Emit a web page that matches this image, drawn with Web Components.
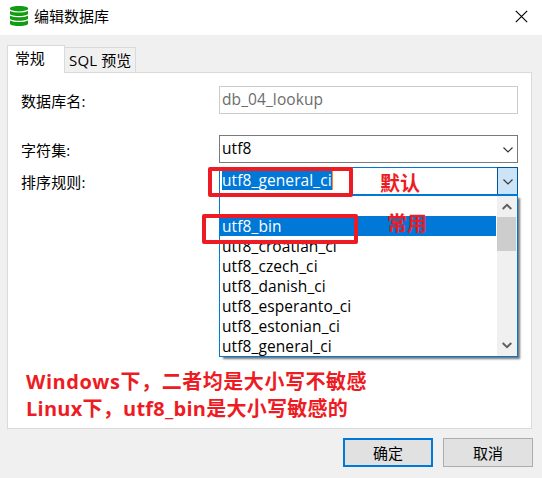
<!DOCTYPE html>
<html lang="zh-CN"><head><meta charset="utf-8"><title>编辑数据库</title>
<style>
html,body{margin:0;width:542px;height:478px;overflow:hidden;background:#f0f0f0}
body{font:15px/20px "Open Sans","Noto Sans CJK SC",sans-serif;color:#000}
</style></head><body>
<db-dialog></db-dialog>
<script>
const define=(name,html,setup)=>customElements.define(name,class extends HTMLElement{
  connectedCallback(){
    if(this.shadowRoot)return;
    const t=document.createElement('template');t.innerHTML=html;
    this.attachShadow({mode:'open'}).append(t.content.cloneNode(true));
    if(setup)setup(this,this.shadowRoot);
  }
});

define('title-bar',`<style>
:host{display:flex;height:35px;box-sizing:border-box;background:#fff;align-items:flex-start;padding:6px 14px 0 10px}
.t{margin-left:6px;line-height:20px;flex:1}
svg{display:block}.x{margin-top:4px}
</style>
<svg width="18" height="20" viewBox="0 0 18 20"><path d="M0 2C1 .5 5 0 9 0s8 .5 9 2v16c-1 1.500-5 2-9 2s-8-.5-9-2z" fill="#129c12"/>
<g fill="none" stroke="#fff" stroke-width="1.200"><path d="M-.5 4C2 5.700 5 6 9 6s7-.3 9.500-2"/><path d="M-.5 8.700C2 10.400 5 10.700 9 10.700s7-.3 9.500-2"/><path d="M-.5 13.400C2 15.100 5 15.400 9 15.400s7-.3 9.500-2"/></g></svg>
<span class="t"><slot></slot></span>
<svg class="x" width="13" height="13"><path d="M.8.8l11.400 11.400M12.200.8L.8 12.200" stroke="#000" stroke-width="1.150"/></svg>`);

define('tab-item',`<style>
:host{display:block;box-sizing:border-box;height:25px;width:71px;border:1px solid #dadada;border-left:0;border-bottom:0;padding:2px 0 0 4px;white-space:nowrap;letter-spacing:.15px}
:host([active]){height:28px;width:58px;background:#fff;border-left:1px solid #dadada;margin-bottom:-1px;padding:2px 0 0 7px;letter-spacing:-.2px}
</style><slot></slot>`);

define('form-row',`<style>
:host{display:grid;grid-template-columns:198px 299px;height:28px}
label{padding-top:5px;letter-spacing:.1px}
</style><label></label><slot></slot>`,(h,r)=>{r.querySelector('label').textContent=h.getAttribute('label')});

define('text-box',`<style>
:host{display:flex;position:relative;box-sizing:border-box;height:28px;border:1px solid #7a7a7a;background:#fff;padding:2px 0 0 2px;white-space:nowrap;font-size:15.5px;letter-spacing:.1px}
:host([disabled]){border-color:#ccc;color:#6d6d6d}
:host([open]){border-color:#0078d7;padding-top:3px}
.v{height:20px;line-height:20px}
:host([open]) .v{background:#0078d7;color:#fff;height:19px;line-height:18px;border-right:1px solid #ff8728}
.b{display:none;box-sizing:border-box;position:absolute;right:-1px;top:-1px;width:21px;height:28px;border:1px solid transparent}
:host([combo]) .b{display:block}
:host([open]) .b{background:#cce4f7;border-color:#005499}
svg{display:block;margin:11px 0 0 5px}
</style><span class="v"><slot></slot></span><span class="b"><svg width="10" height="6"><path d="M.5.5L5 5 9.500.5" fill="none" stroke="#333" stroke-width="1.150"/></svg></span><slot name="menu"></slot>`);

define('drop-list',`<style>
:host{display:grid;grid-template-columns:276px 1px 20px;position:absolute;z-index:2;left:-1px;top:26px;width:299px;height:163px;box-sizing:border-box;border:1px solid #0078d7;border-top-width:2px;background:#fff;box-shadow:3px 3px 2px -1px rgba(0,0,0,.55)}
.rows{overflow:hidden}
.bar{grid-column:3;background:#f0f0f0;display:flex;flex-direction:column;align-items:center;padding-top:7px;box-sizing:border-box;height:160px}
.thumb{width:19px;height:34px;background:#cdcdcd;margin:7px auto 0 0}
.down{margin-top:auto;margin-bottom:7px}
</style><div class="rows"><slot></slot></div><div class="bar">
<svg width="10" height="7"><path d="M.7 6L5 1.800 9.300 6" fill="none" stroke="#606060" stroke-width="2"/></svg>
<span class="thumb"></span>
<svg class="down" width="10" height="7"><path d="M.7 1L5 5.200 9.300 1" fill="none" stroke="#606060" stroke-width="2"/></svg></div>`);

define('list-option',`<style>
:host{display:block;height:20px;line-height:20px;padding-left:2px;white-space:nowrap}
:host([selected]){background:#0078d7;color:#fff}
</style><slot></slot>`);

define('push-button',`<style>
:host{display:flex;box-sizing:border-box;width:90px;height:29px;border:1px solid #adadad;background:#e1e1e1;justify-content:center;align-items:center}
:host([primary]){border:2px solid #0078d7}
</style><slot></slot>`);

define('mark-box',`<style>
:host{position:absolute;z-index:4;box-sizing:border-box;border:4px solid #ed1c24;border-radius:2px}
</style>`);
define('mark-text',`<style>
:host{position:absolute;z-index:4;color:#ed1c24;font-weight:700;font-size:20px;line-height:27px;white-space:nowrap}
</style><slot></slot>`);

define('db-dialog',`<style>
:host{display:block;position:relative;width:542px;height:478px}
.tabs{display:flex;align-items:flex-end;height:37px;padding-left:7px}
.page{box-sizing:border-box;margin:0 10px 0 7px;height:357px;border:1px solid #dadada;background:#fff;padding:13px 0 0 13px}
tab-item[active]{position:relative;z-index:1}
.charset{margin-top:21px}.collation{margin-top:4px}
.actions{display:flex;justify-content:flex-end;gap:10px;padding:9px 9px 0 0}
.n1{letter-spacing:.55px}.n2{letter-spacing:.25px}
</style>
<title-bar>编辑数据库</title-bar>
<div class="tabs"><tab-item active>常规</tab-item><tab-item>SQL 预览</tab-item></div>
<div class="page">
<form-row label="数据库名:"><text-box disabled>db_04_lookup</text-box></form-row>
<form-row class="charset" label="字符集:"><text-box combo>utf8</text-box></form-row>
<form-row class="collation" label="排序规则:"><text-box combo open>utf8_general_ci<drop-list slot="menu">
<list-option></list-option><list-option selected>utf8_bin</list-option><list-option>utf8_croatian_ci</list-option><list-option>utf8_czech_ci</list-option><list-option>utf8_danish_ci</list-option><list-option>utf8_esperanto_ci</list-option><list-option>utf8_estonian_ci</list-option><list-option>utf8_general_ci</list-option></drop-list></text-box></form-row>
</div>
<div class="actions"><push-button primary>确定</push-button><push-button>取消</push-button></div>
<mark-box style="left:208px;top:167px;width:145px;height:30px"></mark-box>
<mark-box style="left:202px;top:214px;width:156px;height:30px"></mark-box>
<mark-text style="left:380px;top:170px">默认</mark-text>
<mark-text style="left:387px;top:210px">常用</mark-text>
<mark-text style="left:26px;top:368px"><span class="n1">Windows下，二者均是大小写不敏感</span><br><span class="n2">Linux下，utf8_bin是大小写敏感的</span></mark-text>`);
</script></body></html>
